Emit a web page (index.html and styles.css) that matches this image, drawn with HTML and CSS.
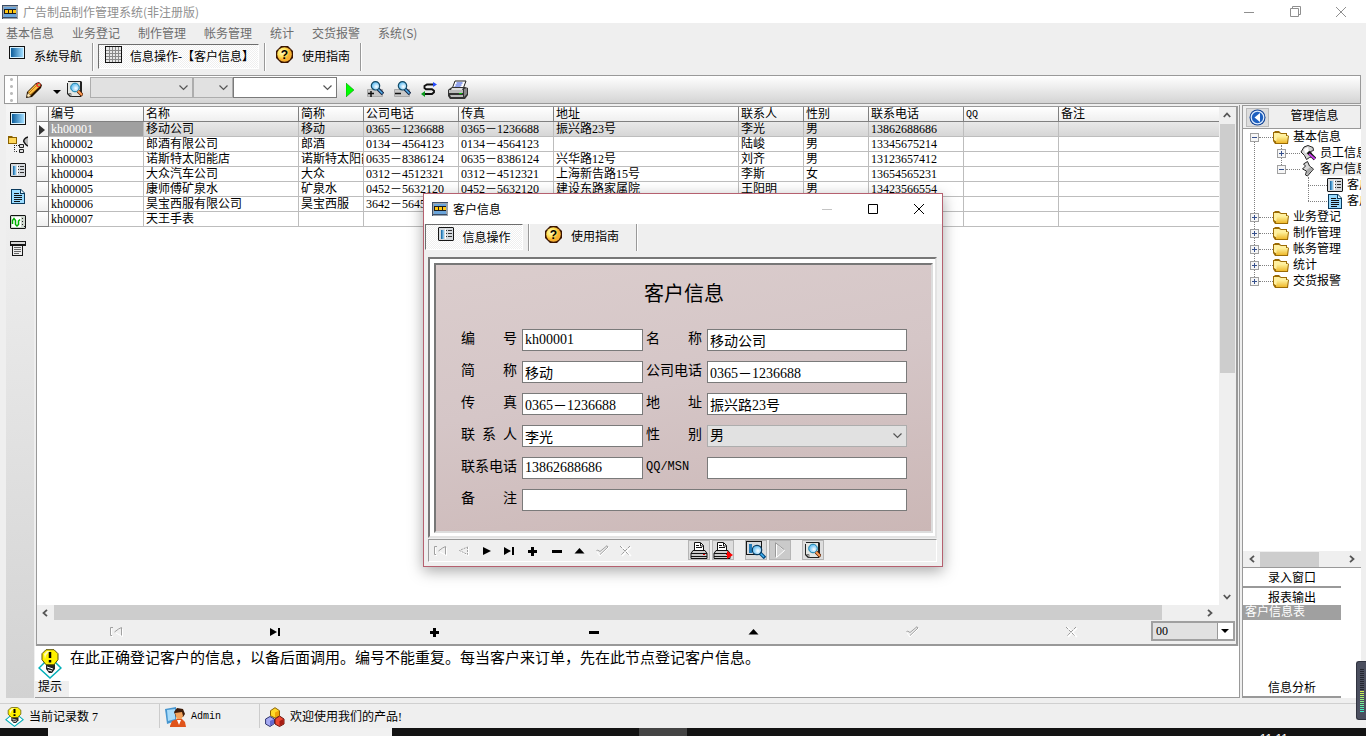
FILE: index.html
```
<!DOCTYPE html>
<html lang="zh-CN">
<head>
<meta charset="utf-8">
<title>广告制品制作管理系统</title>
<link rel="stylesheet" href="styles.css">
</head>
<body>
<svg class="defs" aria-hidden="true">
  <defs>
    <linearGradient id="gBlue"><stop offset="0" stop-color="#0b5c9a"/><stop offset="1" stop-color="#9fdcff"/></linearGradient>
    <linearGradient id="gFold" x2="0" y2="1"><stop offset="0" stop-color="#fff3a0"/><stop offset="1" stop-color="#eeb92c"/></linearGradient>
    <radialGradient id="gHelp" cx=".35" cy=".35"><stop offset="0" stop-color="#fffbd0"/><stop offset=".6" stop-color="#ffe45a"/><stop offset="1" stop-color="#f7b030"/></radialGradient>
    <radialGradient id="gLens" cx=".6" cy=".6"><stop offset="0" stop-color="#fff"/><stop offset="1" stop-color="#6fc4f5"/></radialGradient>
  </defs>
  <symbol id="app" viewBox="0 0 16 14"><path fill="#9aa4ae" d="M0 0h16v14H0z"/><path fill="#3b4d66" d="M0 0h16v1H0zM0 0h1v14H0zM1 12h14v1H1z"/><path fill="#6aa5dc" d="M2 2h12v10H2z"/><path fill="#1c1c1c" d="M2 4h12v5H2z"/><path fill="#ffc814" d="M3 5h3v3H3zM7 5h3v3H7zM11 5h3v3h-3z"/></symbol>
  <symbol id="screen" viewBox="0 0 16 13"><path fill="#111" d="M0 0h16v13H0z"/><path fill="#d8f2ff" d="M1 1h14v11H1z"/><path fill="url(#gBlue)" d="M2 2h12v9H2z"/></symbol>
  <symbol id="grid" viewBox="0 0 17 17"><path fill="#111" d="M0 0h17v17H0z"/><path fill="#e8e8e8" d="M1 1h15v15H1z"/><path stroke="#8a8a8a" d="M4.500 1v15M7.500 1v15M10.500 1v15M13.500 1v15M1 4.500h15M1 7.500h15M1 10.500h15M1 13.500h15"/></symbol>
  <symbol id="help" viewBox="0 0 17 17"><path fill="#3a1400" d="M5 0h7l5 5v7l-5 5H5l-5-5V5z"/><circle cx="8.500" cy="8.500" r="7.300" fill="url(#gHelp)"/><text x="8.500" y="13" text-anchor="middle" class="q">?</text></symbol>
  <symbol id="form" viewBox="0 0 16 14"><path fill="#161616" d="M1 0h14l1 1v12l-1 1H1l-1-1V1z"/><path fill="#d6dade" d="M1 1h14v12H1z"/><path fill="url(#gBlue)" d="M3 3h3v9H3z"/><path stroke="#333" d="M8 3.500h1M10 3.500h4M8 6.500h1M10 6.500h4M8 9.500h1M10 9.500h4"/><path stroke="#fff" d="M7.500 2v10"/></symbol>
  <symbol id="doc" viewBox="0 0 14 15"><path fill="#0b3a5c" d="M0 0h10l4 4v11H0z"/><path fill="#9bdcff" d="M1 1h8v4h4v9H1z"/><path fill="#e2f6ff" d="M10 1l3 3h-3z"/><path stroke="#111" d="M3 4.500h5M3 6.500h8M3 8.500h8M3 10.500h8M3 12.500h6"/></symbol>
  <symbol id="wave" viewBox="0 0 16 14"><path fill="#111" d="M1 0h14l1 1v12l-1 1H1l-1-1V1z"/><path fill="#cfd8cf" d="M1 1h14v12H1z"/><path fill="#fff" d="M2 2h9v10H2z"/><path fill="none" stroke="#00b000" stroke-width="1.500" d="M2.500 9V5.500L4 3.500l1.500 2v4L7 11l1.500-1.500V6L10 4.500"/><path stroke="#222" d="M12 3.500h1M12 6.500h1M12 9.500h1M14 11.500h1"/></symbol>
  <symbol id="receipt" viewBox="0 0 16 15"><path fill="#161616" d="M0 0h16v5H0zM2 4h11v11H2z"/><path fill="#d8d8d8" d="M1 1h14v2H1z"/><path fill="#eee" d="M3 5h9v9H3z"/><path stroke="#666" d="M4 6.500h7M4 8.500h7M4 10.500h7M4 12.500h5"/></symbol>
  <symbol id="nodes" viewBox="0 0 20 17"><path fill="#8a6200" d="M0 0h4l1 1h4v7H0z"/><path fill="#ffd75a" d="M1 2h7v5H1z"/><path fill="none" stroke="#222" stroke-dasharray="1 1" d="M6.500 9v6.500H10M8 9.500h3"/><path fill="#ddd" stroke="#222" d="M11.500 8.500h4v3h-4zM11.500 13.500h4v3h-4z"/><path fill="#bbb" stroke="#111" stroke-width="1.500" d="M20 1c-3 1-5 3-4 5s2 3 4 4"/></symbol>
  <symbol id="pencil" viewBox="0 0 16 16"><path fill="#251400" d="M0 16l1-6L10 1l3-1 3 3-1 3-9 9z"/><path fill="#ffc247" d="M2 10l8-8 3 3-9 8z"/><path fill="#ffe9b8" d="M2 11l3 3-3 1-1-1z"/><path stroke="#a85e08" stroke-width=".7" d="M3 11l8-8M5 13l8-8"/><circle cx="12.500" cy="3" r="2.300" fill="#f0402a"/><circle cx="13" cy="3" r="1" fill="#8edc74"/></symbol>
  <symbol id="preview" viewBox="0 0 16 17"><path fill="#222" d="M1 0h13l1 1v12l-1 1v2H3l-3-3V2h1z"/><path fill="#e4e7e4" d="M1 1h12v14H4l-3-3z"/><path fill="none" stroke="#777" d="M2 12.500h2v3"/><circle cx="8" cy="6.500" r="4.300" fill="url(#gLens)" stroke="#157fa8"/><path stroke="#52220a" stroke-width="3.500" d="M11 10l4.500 4.500"/><path stroke="#ff9d54" stroke-width="2" d="M11 10l4 4"/></symbol>
  <symbol id="zoomin" viewBox="0 0 17 17"><path fill="#c8c8c8" stroke="#aaa" d="M.5 8.500h15v7H.5z"/><path stroke="#111" stroke-width="1.500" d="M1 12.500h6M4 10v6"/><path stroke="#124" stroke-width="3.500" d="M11 8l5 5"/><path stroke="#56b3f0" stroke-width="1.500" d="M11 8l4.500 4.500"/><circle cx="8.500" cy="4.800" r="4.200" fill="url(#gLens)" stroke="#134a66" stroke-width="1.200"/></symbol>
  <symbol id="zoomout" viewBox="0 0 17 17"><path fill="#c8c8c8" stroke="#aaa" d="M.5 8.500h15v7H.5z"/><path stroke="#111" stroke-width="1.500" d="M1 12.500h6"/><path stroke="#124" stroke-width="3.500" d="M11 8l5 5"/><path stroke="#56b3f0" stroke-width="1.500" d="M11 8l4.500 4.500"/><circle cx="8.500" cy="4.800" r="4.200" fill="url(#gLens)" stroke="#134a66" stroke-width="1.200"/></symbol>
  <symbol id="swap" viewBox="0 0 17 15"><path fill="none" stroke="#111" stroke-width="1.900" d="M14 2.500H6L3.500 4v2L5 7.200h6l2 1.500v1.600l-2 1.700H2"/><path fill="#244bff" d="M12 0l4 2.500L12 5z"/><path fill="#0a9a1c" d="M4 9l-4 3 4 3z"/></symbol>
  <symbol id="printer" viewBox="0 0 21 19"><path fill="#fff" stroke="#222" d="M7 1h11l-3 8H4z"/><path stroke="#2447d8" stroke-width="1.200" d="M8.500 3h6M7.500 5h6M6.500 7h6"/><path fill="#333" d="M1 9l3-2h13l3 1v7l-3 4H2l-2-3v-6z"/><path fill="#bbb" d="M1 10h14v3H1zM2 15h13v2H3z"/><path fill="#ddd" d="M4 8h11l-1 2H3z"/><path fill="#0b0" d="M11 13h3v1h-3z"/><path fill="#888" d="M16 9l3-1v6l-3 3z"/></symbol>
  <symbol id="folder" viewBox="0 0 16 13"><path fill="#9b6b05" d="M1 1l1-1h4l2 2h6v2l2 1-1 8H2l-2-3V1z"/><path fill="#fff0a0" d="M1 2h5l2 1h5v2H4v6L1 9z"/><path fill="url(#gFold)" d="M4 5h11l-1 7H3z"/></symbol>
  <symbol id="staff" viewBox="0 0 16 16"><path fill="#d4d4d4" stroke="#222" d="M1 7l3-5 4-1.500 5 2 .5 3-3 1 2 5-3 1-3 2-2-4z"/><path fill="#fff" d="M4 4l4-2 1 5-4 1z"/><path stroke="#111" stroke-width="3.600" d="M8 7l7 7"/><path stroke="#c63ce8" stroke-width="1.800" d="M9 9l6 5"/></symbol>
  <symbol id="scroll" viewBox="0 0 13 16"><path fill="#d8d8d8" stroke="#222" d="M2 3l4-2.500L8 5l4 3-6 7-2-1 1-4-4-2 3-3z"/><path fill="#aaa" d="M5 9l4-3 2 2-5 6z"/></symbol>
  <symbol id="back" viewBox="0 0 17 17"><circle cx="8.500" cy="8.500" r="8" fill="#0e3f93"/><circle cx="8.500" cy="8.500" r="6.300" fill="#1e60c0" stroke="#dcecff" stroke-width="1.300"/><path fill="#fff" d="M11 4v9L5.500 8.500z"/></symbol>
  <symbol id="bulb" viewBox="0 0 24 30" preserveAspectRatio="none"><path fill="#fff" stroke="#00aeb8" stroke-width="1.500" d="M12 8l11 11-11 10L1 19z"/><path fill="#222" d="M8 15h9v5l-3 4h-3l-3-4z"/><path stroke="#fff" d="M9 18l6 2M10 21l4 1"/><path fill="#fff200" stroke="#5a5200" d="M8 .7h8l4 4v6l-4 5H8l-4-5v-6z"/><path fill="#fffbb4" d="M6 5l3-3h3l-4 4-1 4z"/><path stroke="#000" stroke-width="2.500" d="M12 3v6M12 11v2.500"/></symbol>
  <symbol id="user" viewBox="0 0 21 20"><path fill="#4796cf" d="M0 2l11-2v14l-9 3z"/><path fill="#a9dcfa" d="M2 3l8-1v10l-7 2z"/><path fill="#3d1b08" d="M9 5l3-4 6 1 2 5-2 3h-7z"/><path fill="#f3a35c" d="M10 6l7-1 1 4-2 4h-4z"/><path fill="#e0541b" d="M5 19l2-5 5-2h5l3 3 1 5H5z"/><path fill="#fff" d="M12 13h4l-2 5z"/></symbol>
  <symbol id="cubes" viewBox="0 0 20 20"><path fill="#ffd928" stroke="#8b6100" d="M10 .7l4.500 3v5L10 11 5.500 8.700v-5z"/><path fill="#f0a508" d="M10 5.500l4-2v5l-4 2z"/><path fill="#a5a9f2" stroke="#30356f" d="M5 9.500l4.500 2.500v4.500L5 19.500.6 17v-5z"/><path fill="#6469cf" d="M5 14l4-2v4.500L5 19z"/><path fill="#ee4a32" stroke="#6e120b" d="M14.500 9l4.500 3v5l-4.500 2.500L10 17v-5z"/><path fill="#a51c14" d="M14.500 14l4-2v4.500l-4 2.500z"/></symbol>
  <symbol id="first" viewBox="0 0 13 10"><path fill="none" stroke="#fff" d="M3 9.500H1.500v-8M12.500 2v7.500L6 6"/><path fill="none" stroke="#a0a0a0" d="M3 .5H.5v8H2M4.500 5l4-3 3-1.500v8"/></symbol>
  <symbol id="prev" viewBox="0 0 13 10"><path fill="none" stroke="#fff" d="M11.500 1v8.500L4 6"/><path fill="none" stroke="#a0a0a0" stroke-dasharray="2 1" d="M10.500 1v7.500l-8-4z"/></symbol>
  <symbol id="next" viewBox="0 0 13 10"><path d="M3 1l8 4-8 4z"/></symbol>
  <symbol id="last" viewBox="0 0 13 10"><path d="M1 1l7 4-7 4zM9 1h2v8H9z"/></symbol>
  <symbol id="plus" viewBox="0 0 13 10"><path d="M5 1h3v3h3v3H8v3H5V7H2V4h3z"/></symbol>
  <symbol id="minus" viewBox="0 0 13 10"><path d="M2 4h10v3H2z"/></symbol>
  <symbol id="up" viewBox="0 0 13 10"><path d="M6.500 2l5 5.500h-10z"/></symbol>
  <symbol id="check" viewBox="0 0 13 12"><path fill="none" stroke="#fff" d="M1 7l3 4L13 2"/><path fill="none" stroke="#a0a0a0" d="M.5 6l1-1 2.500 1.500L11 .7 12 2 4 9.500"/></symbol>
  <symbol id="cross" viewBox="0 0 13 12"><path stroke="#fff" stroke-width="1.500" d="M2 1l10 10M12 2l-9 9"/><path fill="none" stroke="#999" stroke-dasharray="3 1" d="M1 1l9 9M11 1l-9 9"/></symbol>
  <symbol id="print" viewBox="0 0 18 17"><path fill="#fff" stroke="#111" d="M4.500 8V.5h6l3 3V8"/><path fill="none" stroke="#111" d="M6 3.500h3M6 5.500h6M10.500 1v3h3"/><path fill="#ccc" stroke="#111" d="M3 8.500h12l2 3v5H1v-5z"/><path stroke="#111" d="M1 11.500h16M1 14.500h16"/><path fill="#e00" d="M13 12h2v1h-2z"/></symbol>
  <symbol id="formfind" viewBox="0 0 20 18"><path fill="#161616" d="M0 0h16v14H0z"/><path fill="#d6dade" d="M1 1h14v12H1z"/><path fill="#237bb8" d="M3 3h3v9H3z"/><path stroke="#064a80" stroke-width="3.500" d="M14 12l5 5"/><path stroke="#40b5f5" stroke-width="1.500" d="M14 12l4 4"/><circle cx="11" cy="9" r="4.700" fill="url(#gLens)" stroke="#073a60" stroke-width="1.200"/></symbol>
  <symbol id="playoff" viewBox="0 0 12 16"><path fill="#d4d4d4" stroke="#fff" d="M2.500 2v13.500l8-7z"/><path fill="none" stroke="#999" d="M10 7.500L1.500.8v14"/></symbol>
  <symbol id="close" viewBox="0 0 12 12"><path fill="none" stroke="currentColor" d="M1 1l10 10M11 1L1 11"/></symbol>
  <symbol id="cleft" viewBox="0 0 8 8"><path fill="none" stroke="#555" stroke-width="1.800" d="M6 .8L2.500 4 6 7.200"/></symbol>
  <symbol id="cright" viewBox="0 0 8 8"><path fill="none" stroke="#555" stroke-width="1.800" d="M2 .8L5.500 4 2 7.200"/></symbol>
  <symbol id="cup" viewBox="0 0 8 8"><path fill="none" stroke="#555" stroke-width="1.800" d="M.8 6L4 2.500 7.200 6"/></symbol>
  <symbol id="cdown" viewBox="0 0 8 8"><path fill="none" stroke="#555" stroke-width="1.800" d="M.8 2L4 5.500 7.200 2"/></symbol>
</svg>

<div class="app">
  <header class="titlebar">
    <svg class="i16x14"><use href="#app"/></svg>
    <h1 class="title">广告制品制作管理系统(非注册版)</h1>
    <div class="winbtns">
      <button aria-label="最小化"><svg width="10" height="10"><path fill="currentColor" d="M0 5h10v1H0z"/></svg></button>
      <button aria-label="还原"><svg width="11" height="11"><path fill="none" stroke="currentColor" d="M.5 2.500h8v8h-8zM2.500 2V.5h8v8H9"/></svg></button>
      <button aria-label="关闭"><svg width="12" height="12"><use href="#close"/></svg></button>
    </div>
  </header>

  <nav class="menubar">
    <button>基本信息</button><button>业务登记</button><button>制作管理</button><button>帐务管理</button><button>统计</button><button>交货报警</button><button>系统(S)</button>
  </nav>

  <div class="tabs">
    <button class="tab"><svg width="16" height="13"><use href="#screen"/></svg><span>系统导航</span></button>
    <i class="sep"></i>
    <button class="tab active"><svg width="17" height="17"><use href="#grid"/></svg><span>信息操作-【客户信息】</span></button>
    <i class="sep"></i>
    <button class="tab"><svg width="17" height="17"><use href="#help"/></svg><span>使用指南</span></button>
    <i class="sep"></i>
  </div>

  <div class="toolbar">
    <i class="grip"></i>
    <button class="tool pen" aria-label="编辑"><svg width="16" height="16"><use href="#pencil"/></svg></button>
    <button class="tool drop" aria-label="更多"><svg width="8" height="4"><path d="M0 0h8L4 4z"/></svg></button>
    <button class="tool" aria-label="预览"><svg width="16" height="17"><use href="#preview"/></svg></button>
    <div class="filters">
      <select class="combo field" aria-label="字段" disabled><option></option></select>
      <select class="combo op" aria-label="条件" disabled><option></option></select>
      <select class="combo value" aria-label="值"><option></option></select>
    </div>
    <button class="tool run" aria-label="执行"><svg width="8" height="14"><path fill="#00ff00" stroke="#087a08" stroke-width=".5" d="M0 0l8 7-8 7z"/></svg></button>
    <div class="tools">
      <button class="tool" aria-label="放大"><svg width="17" height="17"><use href="#zoomin"/></svg></button>
      <button class="tool" aria-label="缩小"><svg width="17" height="17"><use href="#zoomout"/></svg></button>
      <button class="tool" aria-label="刷新"><svg width="17" height="15"><use href="#swap"/></svg></button>
      <button class="tool" aria-label="打印"><svg width="21" height="19"><use href="#printer"/></svg></button>
    </div>
  </div>

  <main class="work">
    <aside class="rail">
      <button aria-label="导航"><svg width="16" height="13"><use href="#screen"/></svg></button>
      <button aria-label="节点"><svg width="20" height="17"><use href="#nodes"/></svg></button>
      <button aria-label="表单"><svg width="16" height="14"><use href="#form"/></svg></button>
      <button aria-label="报表"><svg width="14" height="15"><use href="#doc"/></svg></button>
      <button aria-label="分析"><svg width="16" height="14"><use href="#wave"/></svg></button>
      <button aria-label="单据"><svg width="16" height="15"><use href="#receipt"/></svg></button>
    </aside>

    <section class="center">
      <div class="panel">
        <div class="gridwrap">
          <div class="gridview">
            <table class="data">
              <colgroup><col class="c12"><col class="c95"><col class="c155"><col class="c65"><col class="c95"><col class="c95"><col class="c185"><col class="c65"><col class="c65"><col class="c95"><col class="c95"><col></colgroup>
              <thead><tr><th></th><th>编号</th><th>名称</th><th>简称</th><th>公司电话</th><th>传真</th><th>地址</th><th>联系人</th><th>性别</th><th>联系电话</th><th class="mono">QQ</th><th>备注</th></tr></thead>
              <tbody>
                <tr class="current"><th><svg width="6" height="10"><path fill="#333" d="M0 0l6 5-6 5z"/></svg></th><td class="sel">kh00001</td><td>移动公司</td><td>移动</td><td>0365－1236688</td><td>0365－1236688</td><td>振兴路23号</td><td>李光</td><td>男</td><td>13862688686</td><td></td><td></td></tr>
                <tr><th></th><td>kh00002</td><td>郎酒有限公司</td><td>郎酒</td><td>0134－4564123</td><td>0134－4564123</td><td></td><td>陆峻</td><td>男</td><td>13345675214</td><td></td><td></td></tr>
                <tr><th></th><td>kh00003</td><td>诺斯特太阳能店</td><td>诺斯特太阳能店</td><td>0635－8386124</td><td>0635－8386124</td><td>兴华路12号</td><td>刘齐</td><td>男</td><td>13123657412</td><td></td><td></td></tr>
                <tr><th></th><td>kh00004</td><td>大众汽车公司</td><td>大众</td><td>0312－4512321</td><td>0312－4512321</td><td>上海新告路15号</td><td>李斯</td><td>女</td><td>13654565231</td><td></td><td></td></tr>
                <tr><th></th><td>kh00005</td><td>康师傅矿泉水</td><td>矿泉水</td><td>0452－5632120</td><td>0452－5632120</td><td>建设东路家属院</td><td>王阳明</td><td>男</td><td>13423566554</td><td></td><td></td></tr>
                <tr><th></th><td>kh00006</td><td>昊宝西服有限公司</td><td>昊宝西服</td><td>3642－5645</td><td></td><td></td><td></td><td></td><td></td><td></td><td></td></tr>
                <tr><th></th><td>kh00007</td><td>天王手表</td><td></td><td></td><td></td><td></td><td></td><td></td><td></td><td></td><td></td></tr>
              </tbody>
            </table>
          </div>
          <div class="vscroll"><svg width="8" height="8"><use href="#cup"/></svg><i class="thumb"></i><svg width="8" height="8"><use href="#cdown"/></svg></div>
        </div>
        <div class="hscroll main"><svg width="8" height="8"><use href="#cleft"/></svg><i class="thumb"></i><svg width="8" height="8"><use href="#cright"/></svg></div>
        <div class="navbar">
          <div class="dbnav">
            <button disabled aria-label="首条"><svg width="13" height="10"><use href="#first"/></svg></button>
            <button aria-label="末条"><svg width="13" height="10"><use href="#last"/></svg></button>
            <button aria-label="新增"><svg width="13" height="10"><use href="#plus"/></svg></button>
            <button aria-label="删除"><svg width="13" height="10"><use href="#minus"/></svg></button>
            <button aria-label="编辑"><svg width="13" height="10"><use href="#up"/></svg></button>
            <button disabled aria-label="保存"><svg width="13" height="12"><use href="#check"/></svg></button>
            <button disabled aria-label="取消"><svg width="13" height="12"><use href="#cross"/></svg></button>
          </div>
          <select class="page" aria-label="页"><option>00</option></select>
        </div>
      </div>
      <div class="hint">
        <div class="hinticon"><svg width="24" height="30"><use href="#bulb"/></svg><label for="memo">提示</label></div>
        <textarea id="memo" readonly>在此正确登记客户的信息，以备后面调用。编号不能重复。每当客户来订单，先在此节点登记客户信息。</textarea>
      </div>
    </section>

    <aside class="side">
      <div class="sidehead"><button aria-label="收起"><svg width="17" height="17"><use href="#back"/></svg></button><h2>管理信息</h2></div>
      <div class="treebox">
        <ul class="tree">
          <li><div class="node"><button class="exp minus" aria-label="折叠"></button><i class="dots"></i><svg width="16" height="13"><use href="#folder"/></svg><span>基本信息</span></div>
            <ul class="sub">
              <li><div class="node"><button class="exp" aria-label="展开"></button><i class="dots"></i><svg width="16" height="16"><use href="#staff"/></svg><span>员工信息</span></div></li>
              <li><div class="node"><button class="exp minus" aria-label="折叠"></button><i class="dots"></i><svg width="16" height="16"><use href="#scroll"/></svg><span class="hot">客户信息</span></div>
                <ul class="sub leafs">
                  <li><div class="node"><i class="dots"></i><svg width="16" height="14"><use href="#form"/></svg><span>客户信息</span></div></li>
                  <li><div class="node"><i class="dots"></i><svg width="16" height="15"><use href="#doc"/></svg><span>客户信息表</span></div></li>
                </ul>
              </li>
            </ul>
          </li>
          <li><div class="node"><button class="exp" aria-label="展开"></button><i class="dots"></i><svg width="16" height="13"><use href="#folder"/></svg><span>业务登记</span></div></li>
          <li><div class="node"><button class="exp" aria-label="展开"></button><i class="dots"></i><svg width="16" height="13"><use href="#folder"/></svg><span>制作管理</span></div></li>
          <li><div class="node"><button class="exp" aria-label="展开"></button><i class="dots"></i><svg width="16" height="13"><use href="#folder"/></svg><span>帐务管理</span></div></li>
          <li><div class="node"><button class="exp" aria-label="展开"></button><i class="dots"></i><svg width="16" height="13"><use href="#folder"/></svg><span>统计</span></div></li>
          <li><div class="node"><button class="exp" aria-label="展开"></button><i class="dots"></i><svg width="16" height="13"><use href="#folder"/></svg><span>交货报警</span></div></li>
        </ul>
      </div>
      <div class="hscroll small"><svg width="8" height="8"><use href="#cleft"/></svg><i class="thumb"></i><svg width="8" height="8"><use href="#cright"/></svg></div>
      <div class="groups">
        <button class="group">录入窗口</button>
        <button class="group open">报表输出</button>
        <div class="items"><a href="#report">客户信息表</a></div>
        <button class="group">信息分析</button>
      </div>
    </aside>
  </main>

  <footer class="status">
    <div class="pane"><svg width="19" height="20"><use href="#bulb"/></svg><span>当前记录数 7</span></div>
    <div class="pane who"><svg width="21" height="20"><use href="#user"/></svg><span class="mono">Admin</span></div>
    <div class="pane"><svg width="20" height="20"><use href="#cubes"/></svg><span>欢迎使用我们的产品!</span></div>
  </footer>
  <div class="taskbar"><i class="search"></i><i class="task"></i><time>11:11</time></div>
</div>

<div class="meter"><i class="off"></i><i class="on"></i></div>

<section class="dialog" role="dialog" aria-label="客户信息">
  <header class="dtitle">
    <svg class="i16x14"><use href="#app"/></svg><span>客户信息</span>
    <div class="winbtns">
      <button class="dim" aria-label="最小化"><svg width="10" height="10"><path fill="currentColor" d="M0 5h10v1H0z"/></svg></button>
      <button aria-label="最大化"><svg width="10" height="10"><path fill="none" stroke="currentColor" d="M.5.5h9v9h-9z"/></svg></button>
      <button aria-label="关闭"><svg width="12" height="12"><use href="#close"/></svg></button>
    </div>
  </header>
  <div class="dtabs">
    <button class="tab active"><svg width="16" height="14"><use href="#form"/></svg><span>信息操作</span></button>
    <i class="sep"></i>
    <button class="tab"><svg width="17" height="17"><use href="#help"/></svg><span>使用指南</span></button>
    <i class="sep"></i>
  </div>
  <div class="frame">
    <form class="card">
      <h2>客户信息</h2>
      <div class="fields">
        <label for="f1">编号</label><input id="f1" class="short" value="kh00001">
        <label for="f2">名称</label><input id="f2" value="移动公司">
        <label for="f3">简称</label><input id="f3" class="short" value="移动">
        <label for="f4">公司电话</label><input id="f4" value="0365－1236688">
        <label for="f5">传真</label><input id="f5" class="short" value="0365－1236688">
        <label for="f6">地址</label><input id="f6" value="振兴路23号">
        <label for="f7">联系人</label><input id="f7" class="short" value="李光">
        <label for="f8">性别</label><select id="f8" class="combo"><option>男</option></select>
        <label for="f9">联系电话</label><input id="f9" class="short" value="13862688686">
        <label for="f10" class="latin">QQ/MSN</label><input id="f10">
        <label for="f11">备注</label><input id="f11" class="wide">
      </div>
    </form>
  </div>
  <div class="dnav">
    <div class="dbnav">
      <button disabled aria-label="首条"><svg width="13" height="10"><use href="#first"/></svg></button>
      <button disabled aria-label="上条"><svg width="13" height="10"><use href="#prev"/></svg></button>
      <button aria-label="下条"><svg width="13" height="10"><use href="#next"/></svg></button>
      <button aria-label="末条"><svg width="13" height="10"><use href="#last"/></svg></button>
      <button aria-label="新增"><svg width="13" height="10"><use href="#plus"/></svg></button>
      <button aria-label="删除"><svg width="13" height="10"><use href="#minus"/></svg></button>
      <button aria-label="编辑"><svg width="13" height="10"><use href="#up"/></svg></button>
      <button disabled aria-label="保存"><svg width="13" height="12"><use href="#check"/></svg></button>
      <button disabled aria-label="取消"><svg width="13" height="12"><use href="#cross"/></svg></button>
    </div>
    <div class="pair">
      <button class="flat" aria-label="打印"><svg width="18" height="17"><use href="#print"/></svg></button>
      <button class="flat" aria-label="直接打印"><svg width="20" height="17"><use href="#print" width="18" height="17"/><path fill="#f00" d="M14 9l6 4-6 4z"/></svg></button>
    </div>
    <div class="pair">
      <button class="flat" aria-label="查找"><svg width="20" height="18"><use href="#formfind"/></svg></button>
      <button class="flat off" aria-label="下一个" disabled><svg width="12" height="16"><use href="#playoff"/></svg></button>
    </div>
    <button class="flat" aria-label="预览"><svg width="16" height="17"><use href="#preview"/></svg></button>
  </div>
</section>
</body>
</html>
```
FILE: styles.css
```
* { box-sizing: border-box; }
body {
  margin: 0;
  font: 12px/14px "Liberation Serif", "Noto Sans CJK SC", sans-serif;
  color: #000;
  background: #efefef;
  overflow: hidden;
}
button, input, select, textarea { font: inherit; color: inherit; margin: 0; border-radius: 0; }
button { border: 0; padding: 0; background: none; display: flex; align-items: center; justify-content: center; }
h1, h2, ul, p { margin: 0; padding: 0; font: inherit; }
ul { list-style: none; }
svg { display: block; flex: none; }
.defs { position: absolute; width: 0; height: 0; }
.q { font: bold 12px "Liberation Sans", sans-serif; }
.mono { font-family: "Liberation Mono", "Noto Sans CJK SC", monospace; font-size: 10px; }
.i16x14 { width: 16px; height: 14px; }

.app { display: flex; flex-direction: column; height: 100vh; }

.titlebar { display: flex; align-items: center; height: 23px; padding: 0 2px; gap: 5px; background: #fff; color: #8f8f8f; flex: none; }
.title { font-family: "Noto Sans CJK SC", sans-serif; line-height: 18px; flex: 1; }
.winbtns { display: flex; margin-left: auto; }
.winbtns button { width: 46px; height: 22px; }

.menubar { display: flex; gap: 18px; height: 20px; padding: 0 6px; color: #6d6d6d; flex: none; font-family: "Noto Sans CJK SC", sans-serif; }

.tabs { display: flex; gap: 5px; height: 28px; padding-left: 3px; flex: none; margin-bottom: 4px; }
.tab { padding: 2px 5px 2px 6px; gap: 9px; align-items: flex-start; height: 26px; }
.tab svg { margin-top: 1px; }
.tab span { padding-top: 5px; white-space: nowrap; }
.tab.active {
  border: 1px solid;
  border-color: #6d6d6d #fff #fff #6d6d6d;
  background: repeating-conic-gradient(#fff 0 25%, #efefef 0 50%) 0 0 / 2px 2px;
}
.tabs .active { height: 25px; margin-top: 1px; padding: 0 4px 0 6px; gap: 8px; }
.sep { width: 1px; background: #999; box-shadow: 1px 0 #fff; }

.toolbar {
  display: flex; align-items: center; height: 29px; margin: 0 5px 0 4px; flex: none;
  border: 1px solid #999; background: linear-gradient(#fff, #d4d4d4);
}
.grip { align-self: stretch; width: 13px; border-right: 1px solid #aaa; background: radial-gradient(circle, #bbb 1px, transparent 2px) 4px 0 / 5px 7px repeat-y #fff; }
.tool.pen { margin: 0 11px 0 8px; }
.tool.drop { margin: 5px 6px 0 0; }
.tool.run { margin: 0 13px 0 9px; }
.filters { display: flex; margin: 0 0 4px 7px; }
.combo {
  appearance: none; height: 21px; border: 1px solid #adadad; padding: 0 18px 0 3px;
  background: #e1e1e1 url("data:image/svg+xml,%3Csvg xmlns='http://www.w3.org/2000/svg' width='9' height='6'%3E%3Cpath fill='none' stroke='%23555' stroke-width='1.2' d='M.5 .5l4 4 4-4'/%3E%3C/svg%3E") no-repeat right 4px center;
}
.combo:disabled { opacity: 1; }
.combo.field { width: 103px; }
.combo.op { width: 40px; }
.combo.value { width: 104px; background-color: #fff; border-color: #7a7a7a; }
.tools { display: flex; gap: 10px; align-items: center; }

.work { display: flex; flex: 1; min-height: 0; padding: 1px 5px 5px 6px; }
.rail { width: 28px; flex: none; display: flex; flex-direction: column; align-items: center; padding: 0 5px 0 0; background: linear-gradient(#f5f5f5, #d2d2d2); }
.rail button { height: 26px; width: 20px; }
.center { flex: 1; min-width: 0; display: flex; flex-direction: column; margin-left: 1px; border-right: 1px solid #999; }
.panel { flex: 1; min-height: 0; display: flex; flex-direction: column; margin: 1px 1px 0; border: 1px solid #999; border-right-width: 2px; border-bottom-width: 2px; padding-right: 1px; }
.gridwrap { flex: 1; min-height: 0; display: flex; background: #fff; }
.gridview { flex: 1; min-width: 0; overflow: hidden; }
.data { width: 100%; table-layout: fixed; border-spacing: 0; }
.data tr { height: 15px; }
.data th, .data td { height: 15px; padding: 1px 0 0 2px; line-height: 13px; font-weight: normal; text-align: left; white-space: nowrap; overflow: hidden; border: 0 solid #bdbdbd; border-width: 0 1px 1px 0; }
.data th { border-color: #808080; background: linear-gradient(#fff, #efefef); }
.data tr > :last-child { border-right: 0; }
.data .current td { background: linear-gradient(#e9e9e9, #d6d6d6); }
.data .current .sel { background: #a0a0a0; color: #fff; }
.c12 { width: 12px; } .c65 { width: 65px; } .c95 { width: 95px; } .c155 { width: 155px; } .c185 { width: 185px; }

.vscroll { width: 16px; display: flex; flex-direction: column; align-items: center; justify-content: space-between; padding: 4px 0; background: #efefef; }
.vscroll .thumb { width: 15px; height: 249px; margin: 5px 0 auto; background: #cdcdcd; }
.hscroll { display: flex; align-items: center; height: 15px; flex: none; background: #efefef; }
.hscroll .thumb { height: 15px; background: #cdcdcd; margin-right: auto; }
.hscroll.main { padding: 0 21px 0 4px; }
.hscroll.main .thumb { flex: 1; margin: 0 44px 0 5px; }
.navbar { display: flex; height: 24px; flex: none; }
.dbnav { display: flex; flex: 1; }
.dbnav button { flex: 1; }
.page {
  appearance: none; width: 84px; height: 20px; margin-top: 1px; padding: 0 3px; border: 2px solid #a0a0a0;
  background: url("data:image/svg+xml,%3Csvg xmlns='http://www.w3.org/2000/svg' width='16' height='16'%3E%3Cpath fill='%23fff' d='M0 0h16v16H0z'/%3E%3Cpath fill='%23999' d='M0 0h1v16H0z'/%3E%3Cpath d='M4 6h8l-4 4z'/%3E%3C/svg%3E") no-repeat right center #e1e1e1;
}
.hint { display: flex; height: 52px; flex: none; background: #fff; border-bottom: 1px solid #999; }
.hinticon { width: 34px; display: flex; flex-direction: column; justify-content: space-between; padding: 3px 0 0 3px; }
.hinticon label { margin-left: -3px; height: 16px; line-height: 12px; background: #efefef; padding-left: 3px; }
#memo { flex: 1; border: 0; resize: none; padding: 3px 1px; background: none; font-size: 15px; line-height: 18px; outline: 0; overflow: hidden; }

.side { width: 119px; flex: none; margin-left: 2px; display: flex; flex-direction: column; background: #fff; border-left: 1px solid #999; }
.sidehead { display: flex; height: 24px; flex: none; border: 1px solid #999; border-left: 0; background: #efefef; }
.sidehead button { width: 23px; margin: 2px 0 1px 3px; background: #ddd; border: 1px solid #bbb; }
.sidehead h2 { flex: 1; text-align: center; line-height: 20px; }
.treebox { flex: 1; overflow: hidden; }
.tree { position: relative; padding-left: 7px; }
.tree ul { position: relative; padding-left: 27px; }
.node { display: flex; align-items: center; height: 16px; white-space: nowrap; }
.node svg { margin-right: 4px; position: relative; }
.tree::before, .sub::before { content: ""; position: absolute; left: 11px; top: 8px; bottom: 8px; border-left: 1px dotted #808080; }
.sub::before { left: 31px; top: 0; bottom: 40px; }
.leafs::before { bottom: 8px; }
.exp { position: relative; width: 9px; height: 9px; flex: none; border: 1px solid #a0a0a0; background: linear-gradient(#36508c, #36508c) center / 5px 1px no-repeat, linear-gradient(#36508c, #36508c) center / 1px 5px no-repeat, #f6f6f6; }
.exp.minus { background: linear-gradient(#36508c, #36508c) center / 5px 1px no-repeat, #f6f6f6; }
.dots { width: 14px; flex: none; border-top: 1px dotted #808080; }
.leafs .dots { width: 19px; margin-left: 4px; }
.hot { background: #efefef; padding-right: 20px; }
.small { height: 17px; padding: 0 5px; border-bottom: 1px solid #999; }
.small .thumb { width: 59px; margin-left: 4px; }
.groups { display: flex; flex-direction: column; width: 98px; height: 130px; flex: none; }
.group { height: 20px; flex: none; padding-top: 2px; border-bottom: 2px solid #999; }
.group.open { height: 17px; border: 0; }
.items { flex: 1; }
.items a { display: block; height: 15px; padding-left: 2px; background: #a0a0a0; color: #fff; text-decoration: none; }

.status { display: flex; height: 25px; flex: none; border-top: 1px solid #d0d0d0; }
.pane { display: flex; align-items: center; gap: 5px; padding: 3px 5px 2px; }
.pane:first-child { width: 160px; border-right: 1px solid #ccc; }
.who { width: 100px; border-right: 1px solid #ccc; }
.taskbar { display: flex; height: 8px; flex: none; padding: 0 78px 0 48px; overflow: hidden; background: #131313; color: #fff; }
.search { width: 344px; background: #f1f1f1; }
.task { width: 48px; margin-left: 247px; background: #444; }
.taskbar time { margin-left: auto; padding-top: 4px; font-family: "Liberation Sans", sans-serif; }

.meter { position: absolute; right: 0; top: 661px; width: 10px; height: 59px; padding: 7px 2px 6px 3px; background: #4b4f5f; border: 1px solid #30333f; border-right: 0; border-radius: 3px 0 0 3px; display: flex; flex-direction: column; }
.meter i { flex: 1; }
.meter .off { background: repeating-linear-gradient(#22252e 0 1px, #4b4f5f 1px 2px); }
.meter .on { background: repeating-linear-gradient(transparent 0 1px, #4b4f5f 1px 2px), linear-gradient(#d8f04a, #2ff0d0); }

.dialog { position: absolute; left: 423px; top: 193px; width: 520px; border: 1px solid #b5606f; background: #efefef; box-shadow: 0 4px 14px rgba(0, 0, 0, .35); }
.dtitle { display: flex; align-items: center; height: 30px; padding-left: 8px; gap: 5px; background: #fff; font-family: "Noto Sans CJK SC", sans-serif; }
.dim { color: #c4c4c4; }
.dtabs { display: flex; gap: 5px; height: 27px; }
.dtabs .tab { padding: 1px 12px 0 11px; }
.dtabs .active { margin-left: 1px; width: 98px; padding: 1px 12px 0; }
.frame { margin: 6px 5px 0 4px; padding: 4px 2px 3px 4px; border: 2px solid; border-color: #777 #e3e3e3 #e3e3e3 #777; background: #fff; }
.card { padding: 15px 24px 20px 25px; border: 2px solid; border-color: #777 #ddd #ddd #777; background: linear-gradient(170deg, #dbcdcd, #d5c6c7 45%, #cbb7b6); font-size: 14px; line-height: 20px; }
.card h2 { text-align: center; font: 20px/26px "Noto Sans CJK SC", sans-serif; margin-bottom: 23px; }
.fields { display: grid; grid-template-columns: 61px 124px 61px 1fr; row-gap: 10px; }
.fields label { padding-right: 5px; text-align: justify; text-align-last: justify; }
.fields .latin { font: 12px/20px "Liberation Mono", monospace; text-align-last: left; }
.fields input, .fields select { height: 22px; min-width: 0; width: 100%; border: 1px solid #7a7a7a; padding: 0 2px; background-color: #fff; }
.fields .short { width: 121px; }
.fields .combo { background-color: #e1e1e1; border-color: #adadad; }
.fields .wide { grid-column: 2 / -1; }
.fields input:focus { outline: 1px solid #3478c0; }
.dnav { display: flex; align-items: flex-start; gap: 11px; height: 23px; margin: 1px 5px 4px 4px; border: 1px solid; border-color: #999 #fff #fff #999; }
.dnav .dbnav { flex: none; width: 208px; height: 21px; margin-right: 40px; }
.pair { display: flex; gap: 2px; }
.flat { width: 22px; height: 20px; background: #dedede; border: 1px solid #b5b5b5; }
.flat.off { background: #cacaca; }
```
